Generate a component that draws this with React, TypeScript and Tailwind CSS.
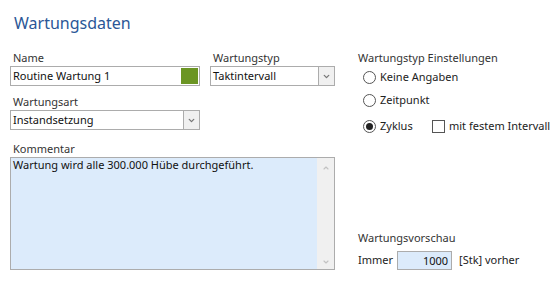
import { ChevronDown, ChevronUp } from "lucide-react"

const FONT = "font-['Noto_Sans',sans-serif]"

function Select({ value, width }: { value: string; width: string }) {
  return (
    <div className={`flex h-[20px] ${width} border border-[#acacac] bg-white`}>
      <span className="flex-1 pl-[2px] text-[11px] leading-[18px] text-[#111]">{value}</span>
      <span className="flex w-[16px] items-center justify-center border-l border-[#acacac] bg-[#f0f0f0]">
        <ChevronDown className="h-[9px] w-[9px] text-[#777]" strokeWidth={3.5} />
      </span>
    </div>
  )
}

function Radio({ label, checked }: { label: string; checked?: boolean }) {
  return (
    <div className="flex h-[16px] items-center gap-[4px]">
      <span className="flex h-[13px] w-[13px] items-center justify-center rounded-full border border-[#555] bg-white">
        {checked && <span className="h-[7px] w-[7px] rounded-full bg-[#222]" />}
      </span>
      <span className="text-[11px] text-[#222]">{label}</span>
    </div>
  )
}

export default function App() {
  return (
    <div className={`h-[295px] w-[554px] overflow-hidden bg-white ${FONT}`}>
      <h1 className="pl-[14px] pt-[12px] text-[16px] leading-[22px] text-[#2b5797]">Wartungsdaten</h1>

      <div className="mt-[17px] flex pl-[10px]">
        {/* linke Spalte */}
        <div className="w-[325px]">
          <div className="flex gap-[10px]">
            <div>
              <div className="pl-[3px] text-[11px] leading-[14px] text-[#333]">Name</div>
              <div className="mt-[1px] flex h-[20px] w-[190px] border border-[#acacac] bg-white">
                <span className="flex-1 pl-[2px] text-[11px] leading-[18px] text-[#111]">Routine Wartung 1</span>
                <span className="m-[1px] ml-0 w-[17px] bg-[#6b9523]" />
              </div>
            </div>
            <div>
              <div className="pl-[3px] text-[11px] leading-[14px] text-[#333]">Wartungstyp</div>
              <div className="mt-[1px]">
                <Select value="Taktintervall" width="w-[125px]" />
              </div>
            </div>
          </div>

          <div className="mt-[9px] pl-[3px] text-[11px] leading-[14px] text-[#333]">Wartungsart</div>
          <div className="mt-[1px]">
            <Select value="Instandsetzung" width="w-[190px]" />
          </div>

          <div className="mt-[12px] pl-[3px] text-[11px] leading-[14px] text-[#333]">Kommentar</div>
          <div className="mt-[1px] flex h-[113px] w-[325px] border border-[#acacac] bg-[#dcebfb]">
            <p className="flex-1 pl-[2px] text-[11px] leading-[14px] text-[#111]">
              Wartung wird alle 300.000 Hübe durchgeführt.
            </p>
            <div className="flex w-[17px] flex-col items-center justify-between bg-[#f0f0f0] pb-[3px] pt-[6px]">
              <ChevronUp className="h-[8px] w-[8px] text-[#c2c2c2]" strokeWidth={3.5} />
              <ChevronDown className="h-[8px] w-[8px] text-[#c2c2c2]" strokeWidth={3.5} />
            </div>
          </div>
        </div>

        {/* rechte Spalte */}
        <div className="ml-[23px] flex flex-col">
          <div className="text-[11px] leading-[14px] text-[#333]">Wartungstyp Einstellungen</div>
          <div className="mt-[4px] pl-[5px]">
            <Radio label="Keine Angaben" />
          </div>
          <div className="mt-[7px] pl-[5px]">
            <Radio label="Zeitpunkt" />
          </div>
          <div className="mt-[10px] flex items-center whitespace-nowrap pl-[5px]">
            <div className="w-[69px]">
              <Radio label="Zyklus" checked />
            </div>
            <span className="h-[13px] w-[13px] border border-[#555] bg-white" />
            <span className="ml-[4px] text-[11px] text-[#222]">mit festem Intervall</span>
          </div>

          <div className="mt-auto">
            <div className="text-[11px] leading-[14px] text-[#333]">Wartungsvorschau</div>
            <div className="mt-[6px] flex items-center whitespace-nowrap">
              <span className="text-[11px] text-[#222]">Immer</span>
              <span className="ml-[4px] h-[19px] w-[55px] border border-[#acacac] bg-[#dcebfb] pr-[3px] text-right text-[11px] leading-[17px] text-[#111]">
                1000
              </span>
              <span className="ml-[7px] text-[11px] text-[#222]">[Stk] vorher</span>
            </div>
          </div>
        </div>
      </div>
    </div>
  )
}
